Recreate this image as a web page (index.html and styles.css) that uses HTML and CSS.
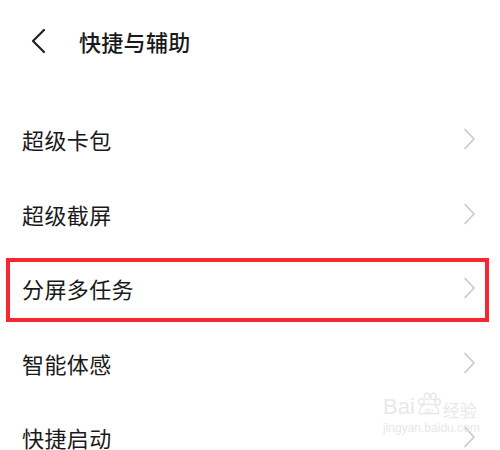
FILE: index.html
```html
<!DOCTYPE html>
<html lang="zh-CN">
  <head>
    <meta charset="UTF-8" />
    <title>快捷与辅助</title>
    <meta name="viewport" content="width=device-width, initial-scale=1.0" />
    <link rel="stylesheet" href="styles.css">
  </head>
  <body>
    <header class="bar">
      <svg class="back" width="16" height="26" viewBox="0 0 16 26">
        <path d="M14 2 L3 13 L14 24" fill="none" stroke="#222" stroke-width="2.2" stroke-linecap="round" stroke-linejoin="round" />
      </svg>
      <h1 class="title">快捷与辅助</h1>
    </header>

    <ul class="list">
      <li class="row">
        <span>超级卡包</span>
        <svg class="arrow" width="13" height="22" viewBox="0 0 13 22"><path d="M2 1.5 L11 11 L2 20.5" /></svg>
      </li>
      <li class="row">
        <span>超级截屏</span>
        <svg class="arrow" width="13" height="22" viewBox="0 0 13 22"><path d="M2 1.5 L11 11 L2 20.5" /></svg>
      </li>
      <li class="row marked">
        <span>分屏多任务</span>
        <svg class="arrow" width="13" height="22" viewBox="0 0 13 22"><path d="M2 1.5 L11 11 L2 20.5" /></svg>
      </li>
      <li class="row">
        <span>智能体感</span>
        <svg class="arrow" width="13" height="22" viewBox="0 0 13 22"><path d="M2 1.5 L11 11 L2 20.5" /></svg>
      </li>
      <li class="row">
        <span>快捷启动</span>
        <svg class="arrow" width="13" height="22" viewBox="0 0 13 22"><path d="M2 1.5 L11 11 L2 20.5" /></svg>
      </li>
    </ul>

    <!-- watermark -->
    <div class="mark">
      <div class="mark-top">
        <span>Bai</span>
        <svg width="28" height="26" viewBox="0 0 26 24">
          <g fill="none" stroke="#e6e6e6" stroke-width="1.2">
            <ellipse cx="6" cy="9" rx="2.5" ry="3" />
            <ellipse cx="11" cy="4" rx="2.5" ry="3" />
            <ellipse cx="17" cy="4" rx="2.5" ry="3" />
            <ellipse cx="21" cy="9" rx="2.5" ry="3" />
            <path d="M4 20 C4 13 9 11 13 11 C17 11 22 13 22 20 Z" />
          </g>
          <text x="13" y="19" font-size="7" text-anchor="middle" fill="#e6e6e6">du</text>
        </svg>
        <span>经验</span>
      </div>
      <div class="mark-url">jingyan.baidu.com</div>
    </div>
  </body>
</html>
```

FILE: styles.css
```css
body {
  margin: 0;
  background: #ffffff;
  font-family: "Noto Sans CJK SC", "Noto Sans", sans-serif;
  color: #1a1a1a;
  position: relative;
  height: 450px;
  overflow: hidden;
}

.bar {
  height: 82px;
  display: flex;
  align-items: center;
  padding-left: 30px;
}
.bar .back {
  display: block;
}
.bar .title {
  margin: 0 0 0 33px;
  font-size: 22px;
  font-weight: 500;
  line-height: 1;
  letter-spacing: 0.3px;
}

.list {
  list-style: none;
  margin: 20px 0 0 0;
  padding: 0;
}
.list .row {
  position: relative;
  height: 74.5px;
  display: flex;
  align-items: center;
  justify-content: space-between;
  padding: 0 24px 0 22px;
  font-size: 22px;
  letter-spacing: 0.4px;
}
.list .row .arrow {
  display: block;
  fill: none;
  stroke: #c9c9c9;
  stroke-width: 1.7;
  stroke-linecap: round;
  stroke-linejoin: round;
}
.list .row.marked::after {
  content: "";
  position: absolute;
  top: 7px;
  bottom: 4px;
  left: 6px;
  right: 11px;
  border: 4px solid #f5282e;
}

.mark {
  position: absolute;
  left: 383px;
  top: 392px;
  color: #e8e8e8;
  font-family: "Liberation Sans", sans-serif;
}
.mark .mark-top {
  display: flex;
  align-items: flex-end;
  font-size: 22px;
  line-height: 1;
}
.mark .mark-top span:last-child {
  font-family: "Noto Sans CJK SC", sans-serif;
  font-size: 17px;
}
.mark .mark-url {
  font-size: 12px;
  margin-top: 3px;
}
```
